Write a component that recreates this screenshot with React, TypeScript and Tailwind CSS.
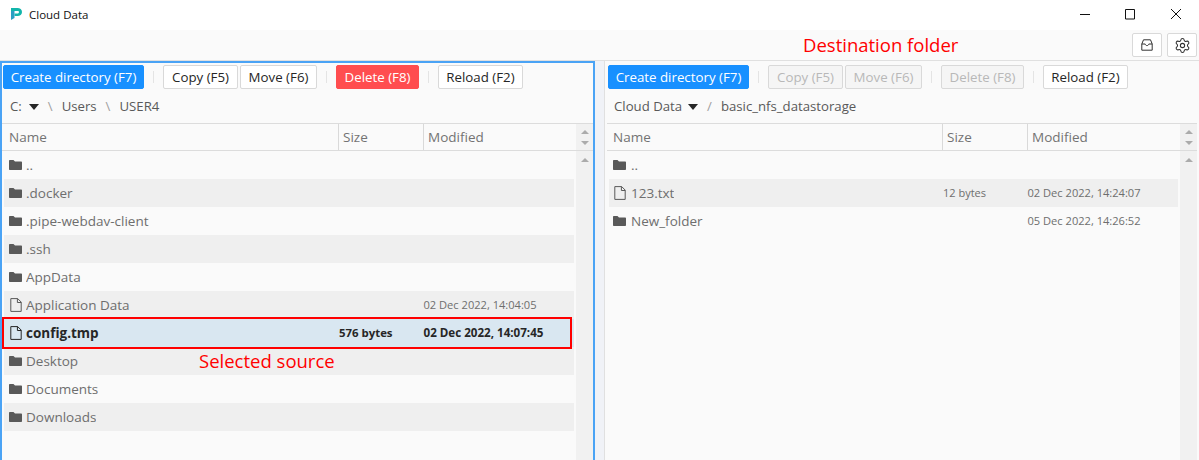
import type { ReactNode } from "react";
import { Settings } from "lucide-react";

type Row = { name: string; kind: "dir" | "file"; size?: string; modified?: string; selected?: boolean };

const sourceRows: Row[] = [
  { name: "..", kind: "dir" },
  { name: ".docker", kind: "dir" },
  { name: ".pipe-webdav-client", kind: "dir" },
  { name: ".ssh", kind: "dir" },
  { name: "AppData", kind: "dir" },
  { name: "Application Data", kind: "file", modified: "02 Dec 2022, 14:04:05" },
  { name: "config.tmp", kind: "file", size: "576 bytes", modified: "02 Dec 2022, 14:07:45", selected: true },
  { name: "Desktop", kind: "dir" },
  { name: "Documents", kind: "dir" },
  { name: "Downloads", kind: "dir" },
];

const destRows: Row[] = [
  { name: "..", kind: "dir" },
  { name: "123.txt", kind: "file", size: "12 bytes", modified: "02 Dec 2022, 14:24:07" },
  { name: "New_folder", kind: "dir", modified: "05 Dec 2022, 14:26:52" },
];

function FolderIcon() {
  return (
    <svg viewBox="0 0 13 10" className="h-[10px] w-[13px] shrink-0" fill="#595959">
      <path d="M0 1C0 .4.400 0 1 0h3.500l1.500 1.500h6c.6 0 1 .4 1 1V9c0 .6-.4 1-1 1H1c-.6 0-1-.4-1-1z" />
    </svg>
  );
}

function FileIcon({ dark }: { dark?: boolean }) {
  return (
    <svg viewBox="0 0 12 14" className="ml-[.5px] h-[14px] w-[12px] shrink-0" fill="none" stroke={dark ? "#262626" : "#595959"} strokeWidth="1">
      <path d="M.8.6h6.900l3.500 3.500v9.300H.8zM7.400.6v3.900h3.800" />
    </svg>
  );
}

function Btn({ label, variant, width }: { label: string; variant?: "primary" | "danger" | "disabled"; width: string }) {
  const look =
    variant === "primary"
      ? "border-[#1890ff] bg-[#1890ff] text-white"
      : variant === "danger"
        ? "border-[#ff4d4f] bg-[#ff4d4f] text-white"
        : variant === "disabled"
          ? "border-[#d9d9d9] bg-[#f5f5f5] text-[#b8b8b8]"
          : "border-[#d9d9d9] bg-white text-[#262626]";
  return (
    <button className={`h-[24px] rounded-[2px] border text-[13.300px] leading-[22px] whitespace-nowrap ${width} ${look}`}>
      {label}
    </button>
  );
}

function Divider() {
  return <span className="mx-[9px] h-[12px] w-px bg-[#e4e4e4]" />;
}

function Toolbar({ disabled }: { disabled?: boolean }) {
  const state = disabled ? "disabled" : undefined;
  return (
    <div className="flex h-[24px] items-center">
      <Btn label="Create directory (F7)" variant="primary" width="w-[141px]" />
      <Divider />
      <Btn label="Copy (F5)" variant={state} width="w-[75px]" />
      <span className="w-[2px]" />
      <Btn label="Move (F6)" variant={state} width="w-[77px]" />
      <Divider />
      <Btn label="Delete (F8)" variant={disabled ? "disabled" : "danger"} width="w-[83px]" />
      <Divider />
      <Btn label="Reload (F2)" width="w-[85px]" />
    </div>
  );
}

function Caret() {
  return <span className="h-0 w-0 border-x-[5px] border-t-[6px] border-x-transparent border-t-[#262626]" />;
}

function ScrollUp() {
  return <span className="h-0 w-0 border-x-[4px] border-b-[4px] border-x-transparent border-b-[#ababab]" />;
}

function FileRow({ row, odd, active }: { row: Row; odd: boolean; active?: boolean }) {
  const bg = row.selected ? "bg-[#d9e7f1]" : odd ? "bg-[#efefef]" : "";
  const text = row.selected ? "font-bold text-[#262626]" : "text-[#6e6e6e]";
  return (
    <div className={`flex h-[28px] items-center ${bg} ${text}`}>
      <div className="flex min-w-0 flex-1 items-center">
        <span className={`flex w-[22px] shrink-0 ${active ? "pl-[5px]" : "pl-[4px]"}`}>
          {row.kind === "dir" ? <FolderIcon /> : <FileIcon dark={row.selected} />}
        </span>
        <span className="truncate text-[13.500px]">{row.name}</span>
      </div>
      <div className={`w-[84px] ${row.selected ? "text-[11.400px]" : "text-[11px]"}`}>{row.size}</div>
      <div className={`w-[151px] pl-[.5px] whitespace-nowrap ${row.selected ? "text-[11.600px]" : "text-[11.100px]"}`}>
        {row.modified}
      </div>
    </div>
  );
}

function Pane({ rows, active, disabled, path }: { rows: Row[]; active?: boolean; disabled?: boolean; path: ReactNode }) {
  return (
    <section
      className={`flex h-[399px] min-w-0 flex-col border-2 border-b-0 bg-[#fafafa] ${
        active ? "w-[595px] border-[#4aa3f5]" : "flex-1 border-transparent"
      }`}
    >
      <div className="pt-[2px] pl-[1px]">
        <Toolbar disabled={disabled} />
      </div>
      <div
        className={`flex h-[35px] items-center gap-[9px] border-b border-[#dcdcdc] pt-[1px] text-[13.200px] text-[#595959] ${
          active ? "pl-[8px]" : "pl-[7px]"
        }`}
      >
        {path}
      </div>
      <div className="flex h-[27px] shrink-0 border-b border-[#dcdcdc] text-[13.500px] text-[#737373]">
        <div className={`flex-1 leading-[26px] ${active ? "pl-[7px]" : "pl-[6px]"}`}>Name</div>
        <div className="w-[85px] border-l border-[#d9d9d9] pl-[4px] leading-[26px]">Size</div>
        <div className="w-[153px] border-l border-[#d9d9d9] pl-[4px] leading-[26px]">Modified</div>
        <div className="flex w-[17px] flex-col items-center justify-center gap-[7px] bg-[#f1f1f1]">
          <ScrollUp />
          <span className="h-0 w-0 border-x-[4px] border-t-[4px] border-x-transparent border-t-[#ababab]" />
        </div>
      </div>
      <div className="flex min-h-0 flex-1">
        <div className="min-w-0 flex-1 pr-[2px] pl-[2px]">
          {rows.map((row, i) => (
            <FileRow key={row.name} row={row} odd={i % 2 === 1} active={active} />
          ))}
        </div>
        <div className="flex w-[17px] shrink-0 justify-center bg-[#f1f1f1] pt-[7px]">
          <ScrollUp />
        </div>
      </div>
    </section>
  );
}

export default function App() {
  return (
    <div className="relative h-[460px] w-[1199px] overflow-hidden bg-[#fafafa] font-['Open_Sans','Noto_Sans',sans-serif]">
      <header className="flex h-[30px] items-center bg-white pl-[11px]">
        <svg viewBox="0 0 11 12" className="mb-[2px] h-[12px] w-[11px]">
          <path d="M0 3V0h6.500C9 0 11 1.600 11 4s-2 4-4.500 4H3.500V5.500h3C7.400 5.500 8 4.800 8 4s-.6-1-1.500-1z" fill="#12b5ab" />
          <path d="M0 3h3.500v7L0 12z" fill="#2a9fc4" />
        </svg>
        <span className="ml-[7px] flex-1 text-[11.500px] text-[#111]">Cloud Data</span>
        <svg viewBox="0 0 102 12" className="mr-[17px] h-[12px] w-[102px]" fill="none" stroke="#111" strokeWidth="1">
          <path d="M0 5.500h10" />
          <path d="M45.500 .5h9v9.500h-9z" />
          <path d="M91 0l10 10M101 0L91 10" />
        </svg>
      </header>
      <div className="flex h-[30px] items-center justify-end gap-[5px] pr-[2px]">
        <button className="flex h-[24px] w-[30px] items-center justify-center rounded-[2px] border border-[#d9d9d9] bg-white">
          <svg viewBox="0 0 12 12" className="h-[12px] w-[12px]" fill="none" stroke="#333" strokeWidth="1">
            <path d="M2.500 .8h7l1.700 4.200v6.200H.8V5zM.8 5h3.400c.2 1 .9 1.600 1.800 1.600S7.600 6 7.800 5h3.400" />
          </svg>
        </button>
        <button className="flex h-[24px] w-[30px] items-center justify-center rounded-[2px] border border-[#d9d9d9] bg-white">
          <Settings size={17} strokeWidth={1.500} color="#333" />
        </button>
      </div>
      <main className="flex border-t border-[#e0e0e0]">
        <Pane
          active
          rows={sourceRows}
          path={
            <>
              <span className="-mr-[2px]">C:</span>
              <Caret />
              <span className="text-[#a0a0a0]">\</span>
              <span>Users</span>
              <span className="text-[#a0a0a0]">\</span>
              <span>USER4</span>
            </>
          }
        />
        <div className="w-[10px] border-r border-[#e0e0e0] bg-[#f0f2f7]" />
        <Pane
          disabled
          rows={destRows}
          path={
            <>
              <span className="-mr-[3px]">Cloud Data</span>
              <Caret />
              <span className="text-[#a0a0a0]">/</span>
              <span>basic_nfs_datastorage</span>
            </>
          }
        />
      </main>
      <div className="absolute top-[317px] left-[2px] h-[32px] w-[570px] border-2 border-[#ff0000]" />
      <span className="absolute top-[347px] left-[199px] text-[18.500px] text-[#ff0000]">Selected source</span>
      <span className="absolute top-[31px] left-[803px] text-[18.500px] text-[#ff0000]">Destination folder</span>
    </div>
  );
}
